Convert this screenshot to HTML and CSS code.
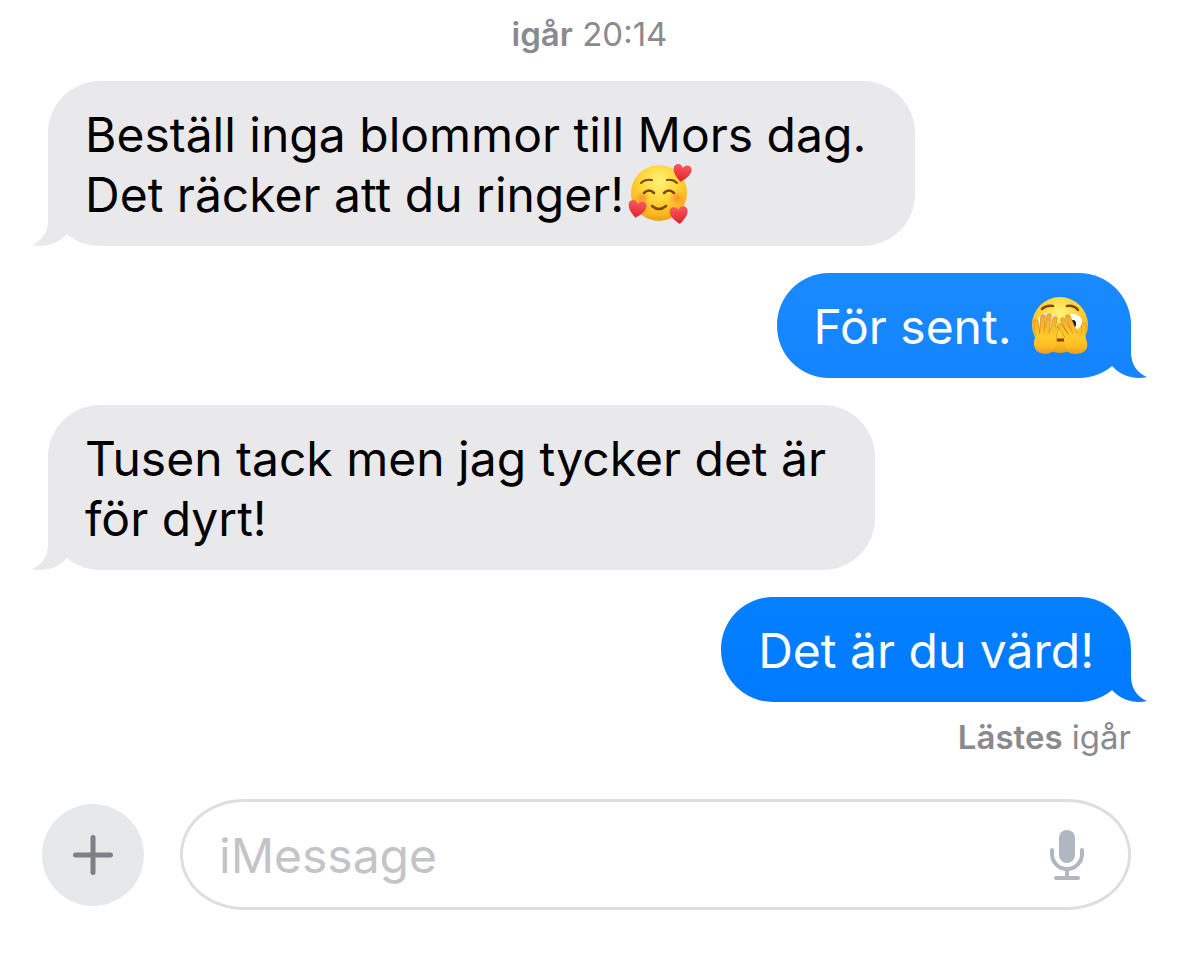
FILE: index.html
```html
<!DOCTYPE html>
<html lang="sv">
<head>
<meta charset="utf-8">
<meta name="viewport" content="width=device-width, initial-scale=1">
<title>iMessage</title>
<link rel="stylesheet" href="styles.css">
</head>
<body>
<main class="chat">
  <p class="stamp"><b>igår</b> <time>20:14</time></p>
  <section class="messages">
    <p class="bubble incoming">Beställ inga blommor till Mors dag.<br>Det räcker att du ringer!<svg class="emoji" viewBox="0 0 60 60" role="img" aria-label="Leende ansikte med hjärtan">
      <defs>
        <radialGradient id="face" cx=".5" cy=".3" r=".72"><stop offset="0" stop-color="#fff27a"/><stop offset=".45" stop-color="#ffd83a"/><stop offset=".8" stop-color="#fbb71e"/><stop offset="1" stop-color="#e99a16"/></radialGradient>
        <radialGradient id="blush"><stop offset="0" stop-color="#ff7a2c" stop-opacity=".75"/><stop offset="1" stop-color="#ff8a2c" stop-opacity="0"/></radialGradient>
        <linearGradient id="heartfill" x1="0" y1="0" x2="0" y2="1"><stop offset="0" stop-color="#fb5a5f"/><stop offset="1" stop-color="#e0202f"/></linearGradient>
        <path id="heart" d="M0 9C-5 5-9 1-9-4c0-5 7-6 9-1 2-5 9-4 9 1 0 5-4 9-9 13z" fill="url(#heartfill)"/>
      </defs>
      <circle cx="30" cy="30" r="28" fill="url(#face)"/>
      <ellipse cx="13" cy="35" rx="8" ry="7" fill="url(#blush)"/>
      <ellipse cx="48" cy="35" rx="9" ry="8" fill="url(#blush)"/>
      <g fill="none" stroke="#80450d" stroke-linecap="round" stroke-width="2">
        <path d="M12 20q4-4 11-3M38 17q6-1 10 3"/>
        <path d="M15 30q5-5 10 0M35 30q5-5 10 0" stroke-width="2.5"/>
        <path d="M23 43q7 6 14 0" stroke-width="2.5"/>
      </g>
      <use href="#heart" transform="translate(53 10) rotate(10)"/>
      <use href="#heart" transform="translate(8 46) rotate(10)"/>
      <use href="#heart" transform="translate(50 52) rotate(-6)"/>
    </svg></p>
    <p class="bubble outgoing">För sent. <svg class="emoji" viewBox="0 0 60 60" role="img" aria-label="Ansikte med kikande öga">
      <defs>
        <linearGradient id="hand" gradientUnits="userSpaceOnUse" x1="0" y1="20" x2="0" y2="59"><stop offset="0" stop-color="#f3a928"/><stop offset=".55" stop-color="#ffca2e"/><stop offset=".8" stop-color="#ffbd22"/><stop offset="1" stop-color="#ee9a1c"/></linearGradient>
      </defs>
      <circle cx="30" cy="30" r="28" fill="url(#face)"/>
      <path d="M12 14q4-4 11-3M37 11q7-1 11 4" fill="none" stroke="#80450d" stroke-width="2.5" stroke-linecap="round"/>
      <ellipse cx="17" cy="26" rx="9" ry="8" fill="#e9e6e2"/>
      <ellipse cx="43" cy="27" rx="9" ry="8" fill="#fff"/>
      <ellipse cx="43" cy="29" rx="3" ry="4" fill="#1c120c"/>
      <path d="M25 45h9" stroke="#8a3f08" stroke-width="3"/>
      <g fill="none" stroke="#cf8418" stroke-width="5" stroke-linecap="round">
        <path d="M6 27l2 17M13 22l-1 18M19 21l-3 20M25 24l-4 18M26 34l-3 12"/>
        <path d="M54 30l-1 16M30 31l10 15M33 25l10 18M38 22l8 18"/>
      </g>
      <g fill="none" stroke="url(#hand)" stroke-width="4" stroke-linecap="round">
        <path d="M6 27l2 17M13 22l-1 18M19 21l-3 20M25 24l-4 18M26 34l-3 12"/>
        <path d="M54 30l-1 16M30 31l10 15M33 25l10 18M38 22l8 18"/>
      </g>
      <path d="M6 40q8-5 19 0 3 4 1 10-2 9-11 9-12-1-11-13zM55 41q-9-5-19 0-3 4-1 10 2 9 11 8 13-1 11-12z" fill="url(#hand)"/>
    </svg></p>
    <p class="bubble incoming">Tusen tack men jag tycker det är<br>för dyrt!</p>
    <p class="bubble outgoing latest">Det är du värd!</p>
  </section>
  <p class="receipt"><b>Lästes</b> igår</p>
  <form class="composer">
    <button class="add" type="button" aria-label="Lägg till">
      <svg viewBox="0 0 40 40" aria-hidden="true"><path d="M20 2.500v35M2.500 20h35" stroke="#7f7f85" stroke-width="5" stroke-linecap="round"/></svg>
    </button>
    <div class="field">
      <input type="text" placeholder="iMessage" aria-label="iMessage">
      <button class="mic" type="button" aria-label="Diktera">
        <svg viewBox="0 0 36 52" aria-hidden="true"><rect x="10" y="1" width="16" height="33" rx="8" fill="#b1b7c0"/><path d="M3 21v4a15 15 0 0 0 30 0v-4M18 40v9M7 49h22" fill="none" stroke="#b1b7c0" stroke-width="4" stroke-linecap="round"/></svg>
      </button>
    </div>
  </form>
</main>
</body>
</html>
```
FILE: styles.css
```css
* { box-sizing: border-box; }

body {
  margin: 0;
  background: #fff;
  color: #000;
  font-family: Inter, "Liberation Sans", sans-serif;
}

p { margin: 0; }

b { font-weight: 600; }

.chat {
  display: flex;
  flex-direction: column;
  padding: 14px 48px 44px;
}

.stamp,
.receipt {
  color: #8a8a8e;
  font-size: 33px;
  line-height: 40px;
}

.stamp { text-align: center; }

.messages {
  display: flex;
  flex-direction: column;
  align-items: flex-start;
  gap: 27px;
  margin-top: 27px;
}

.bubble {
  position: relative;
  padding: 24px 49px 21px 37px;
  border-radius: 52px;
  background: #e9e9eb;
  font-size: 48px;
  line-height: 60px;
}

.bubble::after {
  content: "";
  position: absolute;
  bottom: 0;
  left: -16px;
  width: 40px;
  height: 52px;
  background: inherit;
  clip-path: path("M24 0V26C24 38 30 47 40 51C28 54 14 50 5 40L0 30V0Z");
  transform: scaleX(-1);
}

.outgoing {
  align-self: flex-end;
  padding-right: 37px;
  background: linear-gradient(#1a8aff, #1484ff) bottom / 100% 105px;
  color: #fff;
}

.outgoing::after {
  left: auto;
  right: -16px;
  transform: none;
}

.latest { background-image: linear-gradient(#0580ff, #007aff); }

.emoji {
  width: 60px;
  height: 60px;
  margin: -2px 4px 0 5px;
  overflow: visible;
  vertical-align: top;
}

.receipt {
  margin-top: 15px;
  text-align: right;
}

.composer {
  display: flex;
  align-items: center;
  gap: 36px;
  margin: 42px 0 0 -6px;
}

button {
  display: grid;
  place-items: center;
  flex: none;
  padding: 0;
  border: 0;
  background: none;
}

.add {
  width: 102px;
  height: 102px;
  border-radius: 50%;
  background: #e7e8ea;
}

.add svg { width: 40px; }

.field {
  display: flex;
  align-items: center;
  flex: 1;
  min-width: 0;
  height: 111px;
  padding: 0 43px 0 36px;
  border: 3px solid #dedee0;
  border-radius: 64px / 55px;
}

.field input {
  flex: 1;
  min-width: 0;
  padding: 2px 0 0;
  border: 0;
  outline: 0;
  background: none;
  color: #000;
  font: 48px/60px Inter, "Liberation Sans", sans-serif;
}

.field input::placeholder {
  color: #c4c4c7;
  opacity: 1;
}

.mic svg { width: 36px; }
```
